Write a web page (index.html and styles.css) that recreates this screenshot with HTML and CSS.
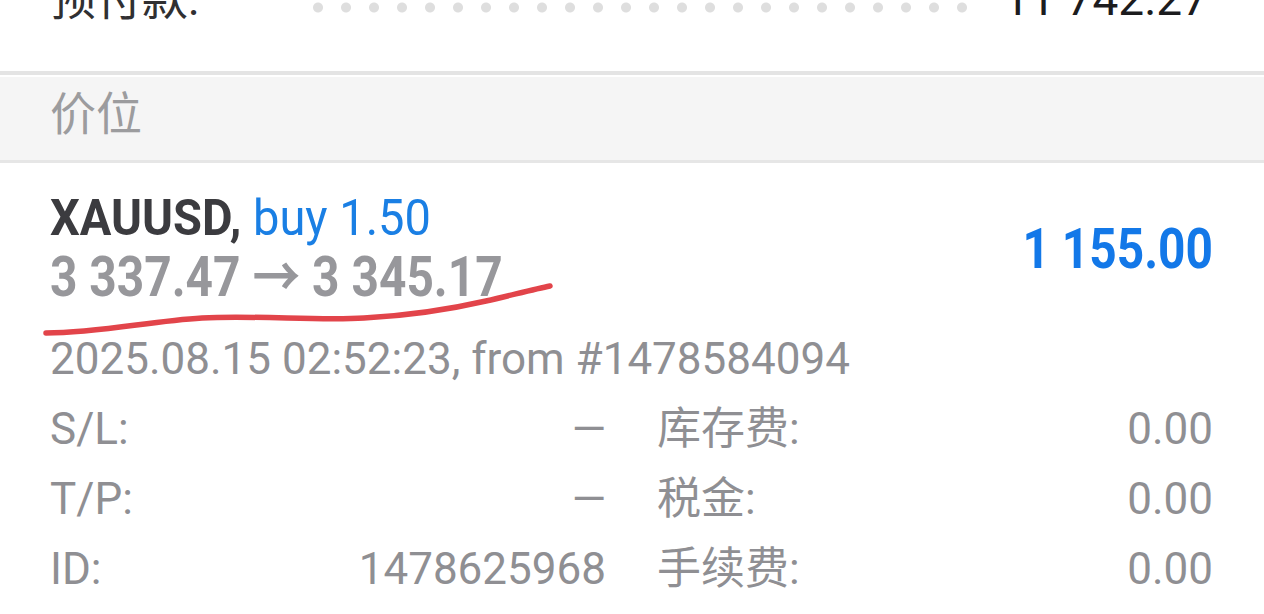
FILE: index.html
```html
<!DOCTYPE html>
<html lang="zh">
<head>
<meta charset="utf-8">
<title>Position</title>
<link rel="stylesheet" href="styles.css">
</head>
<body>
<div class="page">
  <div class="top-row">
    <span class="top-label">预付款:</span>
    <span class="leader"></span>
    <span class="top-value">11 742.27</span>
  </div>
  <div class="section-header">价位</div>
  <div class="position">
    <div class="pos-head">
      <div class="pos-info">
        <div class="line1"><span class="cond cond-l1"><span class="symbol">XAUUSD,</span> <span class="side">buy 1.50</span></span></div>
        <div class="line2"><span class="cond">3 337.47 → 3 345.17</span></div>
      </div>
      <div class="profit"><span class="cond cond-right">1 155.00</span></div>
    </div>
    <div class="date-line">2025.08.15 02:52:23, from #1478584094</div>
    <div class="details">
      <div class="detail"><span>S/L:</span><span>—</span></div>
      <div class="detail"><span>库存费:</span><span>0.00</span></div>
      <div class="detail"><span>T/P:</span><span>—</span></div>
      <div class="detail"><span>税金:</span><span>0.00</span></div>
      <div class="detail"><span>ID:</span><span>1478625968</span></div>
      <div class="detail"><span>手续费:</span><span>0.00</span></div>
    </div>
    <svg class="scribble" width="520" height="60" viewBox="0 0 520 60">
      <path d="M6 50 C 60 50, 110 38, 162 35 S 280 38, 324 35 C 380 32, 420 24, 446 18 S 495 6, 510 3" fill="none" stroke="#e2444a" stroke-width="5.5" stroke-linecap="round"/>
    </svg>
  </div>
</div>
</body>
</html>
```
FILE: styles.css
```css
html, body {
  margin: 0;
  padding: 0;
  background: #ffffff;
}
body {
  font-family: Roboto, "Noto Sans CJK SC", sans-serif;
  width: 1264px;
  height: 614px;
  overflow: hidden;
}
.page {
  width: 1264px;
}
.top-row {
  height: 71px;
  display: flex;
  align-items: flex-start;
  padding: 0 56px 0 50px;
}
.top-label,
.top-value {
  margin-top: -24px;
  line-height: 46px;
  font-size: 46px;
  color: #1c1c1e;
}
.top-label {
  color: #303032;
}
.leader {
  flex: none;
  width: 672px;
  height: 16px;
  margin-left: auto;
  margin-right: 27px;
  background-image: radial-gradient(circle at 50% 50%, #dedede 4.5px, rgba(222, 222, 222, 0) 5.5px);
  background-size: 28px 15px;
  background-repeat: repeat-x;
}
.section-header {
  border-top: 4px solid #e4e4e4;
  border-bottom: 3px solid #e6e6e6;
  background: #f5f5f5;
  box-shadow: inset 0 2px 0 #ffffff;
  height: 92px;
  box-sizing: border-box;
  padding: 0 50px;
  font-size: 46px;
  line-height: 78px;
  color: #9c9c9e;
}
.position {
  position: relative;
  padding: 26px 51px 0 50px;
}
.pos-head {
  display: flex;
  justify-content: space-between;
  align-items: center;
}
.line1, .line2 {
  font-size: 50px;
  line-height: 59px;
  white-space: nowrap;
}
.symbol {
  font-weight: 700;
  color: #3b3b3f;
}
.side {
  color: #1a7fe4;
}
.line2 {
  font-size: 55px;
  font-weight: 700;
  color: #97979b;
}
.cond {
  display: inline-block;
  transform: scaleX(0.87);
  transform-origin: left center;
}
.cond-l1 {
  transform: scaleX(0.94);
}
.cond-right {
  transform-origin: right center;
}
.profit {
  font-size: 55px;
  font-weight: 700;
  color: #1378e8;
  margin-top: 2px;
}
.date-line {
  margin-top: 17px;
  font-size: 44px;
  line-height: 70px;
  color: #8f8f93;
  white-space: nowrap;
}
.details {
  display: grid;
  grid-template-columns: 1fr 1fr;
  column-gap: 51px;
}
.detail {
  display: flex;
  justify-content: space-between;
  font-size: 44px;
  line-height: 70px;
  color: #8f8f93;
}
.scribble {
  position: absolute;
  left: 40px;
  top: 120px;
}
```
